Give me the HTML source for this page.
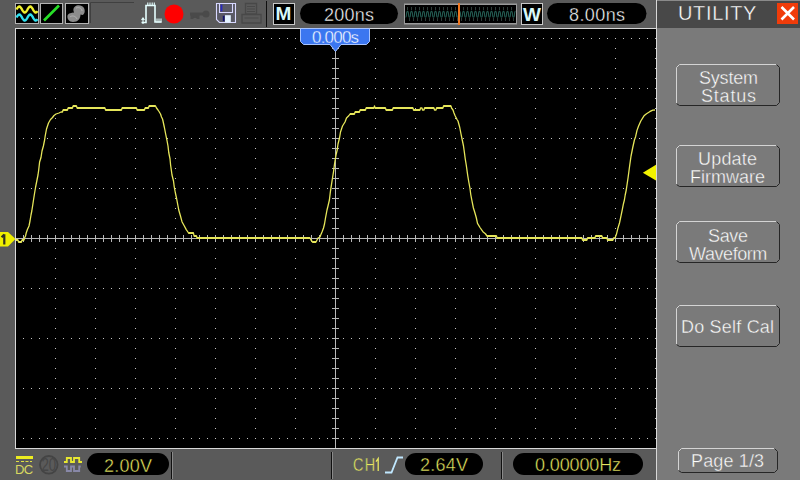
<!DOCTYPE html>
<html><head><meta charset="utf-8">
<style>
html,body{margin:0;padding:0;}
body{width:800px;height:480px;overflow:hidden;background:#5a5a5a;position:relative;font-family:"Liberation Sans",sans-serif;}
svg{position:absolute;left:0;top:0;}
.t{position:absolute;white-space:nowrap;line-height:1;font-family:"Liberation Sans",sans-serif;}
</style></head><body>
<svg width="800" height="480" viewBox="0 0 800 480" shape-rendering="auto">
<rect x="15.5" y="3.5" width="23" height="20" fill="#000" stroke="#b4b4b4"/>
<polyline fill="none" stroke="#f0f030" stroke-width="2.4" points="16.5,9.5 16.83,8.93 17.17,8.39 17.5,7.88 17.83,7.43 18.17,7.06 18.5,6.77 18.83,6.58 19.17,6.5 19.5,6.53 19.83,6.66 20.17,6.9 20.5,7.23 20.83,7.65 21.17,8.13 21.5,8.65 21.83,9.21 22.17,9.79 22.5,10.35 22.83,10.87 23.17,11.35 23.5,11.77 23.83,12.1 24.17,12.34 24.5,12.47 24.83,12.5 25.17,12.42 25.5,12.23 25.83,11.94 26.17,11.57 26.5,11.12 26.83,10.61 27.17,10.07 27.5,9.5 27.83,8.93 28.17,8.39 28.5,7.88 28.83,7.43 29.17,7.06 29.5,6.77 29.83,6.58 30.17,6.5 30.5,6.53 30.83,6.66 31.17,6.9 31.5,7.23 31.83,7.65 32.17,8.13 32.5,8.65 32.83,9.21 33.17,9.79 33.5,10.35 33.83,10.87 34.17,11.35 34.5,11.77 34.83,12.1 35.17,12.34 35.5,12.47 35.83,12.5 36.17,12.42 36.5,12.23 36.83,11.94 37.17,11.57 37.5,11.12"/>
<polyline fill="none" stroke="#30e0f0" stroke-width="2.4" points="16.5,17.5 16.83,16.93 17.17,16.39 17.5,15.88 17.83,15.43 18.17,15.06 18.5,14.77 18.83,14.58 19.17,14.5 19.5,14.53 19.83,14.66 20.17,14.9 20.5,15.23 20.83,15.65 21.17,16.13 21.5,16.65 21.83,17.21 22.17,17.79 22.5,18.35 22.83,18.87 23.17,19.35 23.5,19.77 23.83,20.1 24.17,20.34 24.5,20.47 24.83,20.5 25.17,20.42 25.5,20.23 25.83,19.94 26.17,19.57 26.5,19.12 26.83,18.61 27.17,18.07 27.5,17.5 27.83,16.93 28.17,16.39 28.5,15.88 28.83,15.43 29.17,15.06 29.5,14.77 29.83,14.58 30.17,14.5 30.5,14.53 30.83,14.66 31.17,14.9 31.5,15.23 31.83,15.65 32.17,16.13 32.5,16.65 32.83,17.21 33.17,17.79 33.5,18.35 33.83,18.87 34.17,19.35 34.5,19.77 34.83,20.1 35.17,20.34 35.5,20.47 35.83,20.5 36.17,20.42 36.5,20.23 36.83,19.94 37.17,19.57 37.5,19.12"/>
<rect x="40.5" y="3.5" width="22" height="20" fill="#000" stroke="#b4b4b4"/>
<line x1="44" y1="20.5" x2="59" y2="5.5" stroke="#28e028" stroke-width="2.6"/>
<rect x="65.5" y="3.5" width="23" height="20" fill="#000" stroke="#b4b4b4"/>
<path d="M75 6.5C77 4.5 82 4.5 84 8C85.5 11 84.5 14.5 82.5 15L80.5 14.5C80.5 18.5 78 22 73 22C69 22 67 19 67.5 15.5C68.5 13 71.5 13 74 12.5C73 10 73 8 75 6.5Z" fill="#8c8c8c"/>
<path d="M76 8C79 7 82 8 82 11M70 17C72 15 76 16 77 19" fill="none" stroke="#b0b0b0" stroke-width="1"/>
<path d="M90.5 23V2.5H134" fill="none" stroke="#404040" stroke-width="1"/>
<path d="M141.5 22.5h4.5V5.5h9v16.5h6.5" fill="none" stroke="#e6ffff" stroke-width="1.6"/>
<path d="M147.8 2.5v3.5M150 2.5v3.5M152.2 2.5v3.5M154.3 2.5v3.5M157 18.5v4M159 18.5v4M161 18.5v4M143 18v6M141.5 20l1.5-2 1.5 2" fill="none" stroke="#e6ffff" stroke-width="1.1"/>
<circle cx="174" cy="14" r="9.5" fill="#ff0000"/>
<path d="M190 14h14M192 14v5M195 14v4M198 14v5" stroke="#4a4a4a" stroke-width="3"/>
<circle cx="206" cy="14" r="3.5" fill="#4a4a4a"/>
<path d="M216.5 3.5H235.5V22.5H219.5L216.5 19.5Z" fill="#5a5a66" stroke="#d8d8ff" stroke-width="1.1"/>
<path d="M219.5 3.5V12.5H232.5V3.5" fill="none" stroke="#d8d8ff" stroke-width="1.1"/>
<rect x="220.6" y="4.5" width="1.8" height="6.8" fill="#2828c0"/>
<rect x="225" y="15.2" width="5.8" height="7.3" fill="#e4f4ff"/>
<rect x="222.8" y="15.8" width="1.7" height="5.4" fill="#101070"/>
<path d="M245.5 3.5h11v10.5h-11zM242 14.5h19v8.5h-19z" fill="none" stroke="#484848" stroke-width="1.3"/>
<path d="M247 6.5h8M247 9h8M247 11.5h8M244.5 18h14" fill="none" stroke="#484848" stroke-width="1"/>
<rect x="266" y="1" width="1" height="26" fill="#101010"/>
<rect x="273.5" y="3.5" width="21" height="21" fill="#000" stroke="#c8c8c8"/>
<rect x="300" y="3" width="98" height="21" rx="10.5" fill="#000"/>
<rect x="547" y="3" width="99.5" height="21" rx="10.5" fill="#000"/>
<rect x="404" y="3.5" width="113" height="21" fill="#9a9a9a"/>
<rect x="405" y="5" width="111" height="18" fill="#000"/>
<polyline fill="none" stroke="#22594f" stroke-width="1.1" points="405.5,17.1 405.625,17.075 405.75,16.998 405.875,16.869 406,16.681 406.125,16.426 406.25,16.082 406.375,15.59 406.5,14.2 406.625,12.81 406.75,12.318 406.875,11.974 407,11.719 407.125,11.531 407.25,11.402 407.375,11.325 407.5,11.3 407.625,11.325 407.75,11.402 407.875,11.531 408,11.719 408.125,11.974 408.25,12.318 408.375,12.81 408.5,14.2 408.625,15.59 408.75,16.082 408.875,16.426 409,16.681 409.125,16.869 409.25,16.998 409.375,17.075 409.5,17.1 409.625,17.075 409.75,16.998 409.875,16.869 410,16.681 410.125,16.426 410.25,16.082 410.375,15.59 410.5,14.2 410.625,12.81 410.75,12.318 410.875,11.974 411,11.719 411.125,11.531 411.25,11.402 411.375,11.325 411.5,11.3 411.625,11.325 411.75,11.402 411.875,11.531 412,11.719 412.125,11.974 412.25,12.318 412.375,12.81 412.5,14.2 412.625,15.59 412.75,16.082 412.875,16.426 413,16.681 413.125,16.869 413.25,16.998 413.375,17.075 413.5,17.1 413.625,17.075 413.75,16.998 413.875,16.869 414,16.681 414.125,16.426 414.25,16.082 414.375,15.59 414.5,14.2 414.625,12.81 414.75,12.318 414.875,11.974 415,11.719 415.125,11.531 415.25,11.402 415.375,11.325 415.5,11.3 415.625,11.325 415.75,11.402 415.875,11.531 416,11.719 416.125,11.974 416.25,12.318 416.375,12.81 416.5,14.2 416.625,15.59 416.75,16.082 416.875,16.426 417,16.681 417.125,16.869 417.25,16.998 417.375,17.075 417.5,17.1 417.625,17.075 417.75,16.998 417.875,16.869 418,16.681 418.125,16.426 418.25,16.082 418.375,15.59 418.5,14.2 418.625,12.81 418.75,12.318 418.875,11.974 419,11.719 419.125,11.531 419.25,11.402 419.375,11.325 419.5,11.3 419.625,11.325 419.75,11.402 419.875,11.531 420,11.719 420.125,11.974 420.25,12.318 420.375,12.81 420.5,14.2 420.625,15.59 420.75,16.082 420.875,16.426 421,16.681 421.125,16.869 421.25,16.998 421.375,17.075 421.5,17.1 421.625,17.075 421.75,16.998 421.875,16.869 422,16.681 422.125,16.426 422.25,16.082 422.375,15.59 422.5,14.2 422.625,12.81 422.75,12.318 422.875,11.974 423,11.719 423.125,11.531 423.25,11.402 423.375,11.325 423.5,11.3 423.625,11.325 423.75,11.402 423.875,11.531 424,11.719 424.125,11.974 424.25,12.318 424.375,12.81 424.5,14.2 424.625,15.59 424.75,16.082 424.875,16.426 425,16.681 425.125,16.869 425.25,16.998 425.375,17.075 425.5,17.1 425.625,17.075 425.75,16.998 425.875,16.869 426,16.681 426.125,16.426 426.25,16.082 426.375,15.59 426.5,14.2 426.625,12.81 426.75,12.318 426.875,11.974 427,11.719 427.125,11.531 427.25,11.402 427.375,11.325 427.5,11.3 427.625,11.325 427.75,11.402 427.875,11.531 428,11.719 428.125,11.974 428.25,12.318 428.375,12.81 428.5,14.2 428.625,15.59 428.75,16.082 428.875,16.426 429,16.681 429.125,16.869 429.25,16.998 429.375,17.075 429.5,17.1 429.625,17.075 429.75,16.998 429.875,16.869 430,16.681 430.125,16.426 430.25,16.082 430.375,15.59 430.5,14.2 430.625,12.81 430.75,12.318 430.875,11.974 431,11.719 431.125,11.531 431.25,11.402 431.375,11.325 431.5,11.3 431.625,11.325 431.75,11.402 431.875,11.531 432,11.719 432.125,11.974 432.25,12.318 432.375,12.81 432.5,14.2 432.625,15.59 432.75,16.082 432.875,16.426 433,16.681 433.125,16.869 433.25,16.998 433.375,17.075 433.5,17.1 433.625,17.075 433.75,16.998 433.875,16.869 434,16.681 434.125,16.426 434.25,16.082 434.375,15.59 434.5,14.2 434.625,12.81 434.75,12.318 434.875,11.974 435,11.719 435.125,11.531 435.25,11.402 435.375,11.325 435.5,11.3 435.625,11.325 435.75,11.402 435.875,11.531 436,11.719 436.125,11.974 436.25,12.318 436.375,12.81 436.5,14.2 436.625,15.59 436.75,16.082 436.875,16.426 437,16.681 437.125,16.869 437.25,16.998 437.375,17.075 437.5,17.1 437.625,17.075 437.75,16.998 437.875,16.869 438,16.681 438.125,16.426 438.25,16.082 438.375,15.59 438.5,14.2 438.625,12.81 438.75,12.318 438.875,11.974 439,11.719 439.125,11.531 439.25,11.402 439.375,11.325 439.5,11.3 439.625,11.325 439.75,11.402 439.875,11.531 440,11.719 440.125,11.974 440.25,12.318 440.375,12.81 440.5,14.2 440.625,15.59 440.75,16.082 440.875,16.426 441,16.681 441.125,16.869 441.25,16.998 441.375,17.075 441.5,17.1 441.625,17.075 441.75,16.998 441.875,16.869 442,16.681 442.125,16.426 442.25,16.082 442.375,15.59 442.5,14.2 442.625,12.81 442.75,12.318 442.875,11.974 443,11.719 443.125,11.531 443.25,11.402 443.375,11.325 443.5,11.3 443.625,11.325 443.75,11.402 443.875,11.531 444,11.719 444.125,11.974 444.25,12.318 444.375,12.81 444.5,14.2 444.625,15.59 444.75,16.082 444.875,16.426 445,16.681 445.125,16.869 445.25,16.998 445.375,17.075 445.5,17.1 445.625,17.075 445.75,16.998 445.875,16.869 446,16.681 446.125,16.426 446.25,16.082 446.375,15.59 446.5,14.2 446.625,12.81 446.75,12.318 446.875,11.974 447,11.719 447.125,11.531 447.25,11.402 447.375,11.325 447.5,11.3 447.625,11.325 447.75,11.402 447.875,11.531 448,11.719 448.125,11.974 448.25,12.318 448.375,12.81 448.5,14.2 448.625,15.59 448.75,16.082 448.875,16.426 449,16.681 449.125,16.869 449.25,16.998 449.375,17.075 449.5,17.1 449.625,17.075 449.75,16.998 449.875,16.869 450,16.681 450.125,16.426 450.25,16.082 450.375,15.59 450.5,14.2 450.625,12.81 450.75,12.318 450.875,11.974 451,11.719 451.125,11.531 451.25,11.402 451.375,11.325 451.5,11.3 451.625,11.325 451.75,11.402 451.875,11.531 452,11.719 452.125,11.974 452.25,12.318 452.375,12.81 452.5,14.2 452.625,15.59 452.75,16.082 452.875,16.426 453,16.681 453.125,16.869 453.25,16.998 453.375,17.075 453.5,17.1 453.625,17.075 453.75,16.998 453.875,16.869 454,16.681 454.125,16.426 454.25,16.082 454.375,15.59 454.5,14.2 454.625,12.81 454.75,12.318 454.875,11.974 455,11.719 455.125,11.531 455.25,11.402 455.375,11.325 455.5,11.3 455.625,11.325 455.75,11.402 455.875,11.531 456,11.719 456.125,11.974 456.25,12.318 456.375,12.81 456.5,14.2 456.625,15.59 456.75,16.082 456.875,16.426 457,16.681 457.125,16.869 457.25,16.998 457.375,17.075 457.5,17.1 457.625,17.075 457.75,16.998 457.875,16.869 458,16.681 458.125,16.426 458.25,16.082 458.375,15.59 458.5,14.2 458.625,12.81 458.75,12.318 458.875,11.974 459,11.719 459.125,11.531 459.25,11.402 459.375,11.325 459.5,11.3 459.625,11.325 459.75,11.402 459.875,11.531 460,11.719 460.125,11.974 460.25,12.318 460.375,12.81 460.5,14.2 460.625,15.59 460.75,16.082 460.875,16.426 461,16.681 461.125,16.869 461.25,16.998 461.375,17.075 461.5,17.1 461.625,17.075 461.75,16.998 461.875,16.869 462,16.681 462.125,16.426 462.25,16.082 462.375,15.59 462.5,14.2 462.625,12.81 462.75,12.318 462.875,11.974 463,11.719 463.125,11.531 463.25,11.402 463.375,11.325 463.5,11.3 463.625,11.325 463.75,11.402 463.875,11.531 464,11.719 464.125,11.974 464.25,12.318 464.375,12.81 464.5,14.2 464.625,15.59 464.75,16.082 464.875,16.426 465,16.681 465.125,16.869 465.25,16.998 465.375,17.075 465.5,17.1 465.625,17.075 465.75,16.998 465.875,16.869 466,16.681 466.125,16.426 466.25,16.082 466.375,15.59 466.5,14.2 466.625,12.81 466.75,12.318 466.875,11.974 467,11.719 467.125,11.531 467.25,11.402 467.375,11.325 467.5,11.3 467.625,11.325 467.75,11.402 467.875,11.531 468,11.719 468.125,11.974 468.25,12.318 468.375,12.81 468.5,14.2 468.625,15.59 468.75,16.082 468.875,16.426 469,16.681 469.125,16.869 469.25,16.998 469.375,17.075 469.5,17.1 469.625,17.075 469.75,16.998 469.875,16.869 470,16.681 470.125,16.426 470.25,16.082 470.375,15.59 470.5,14.2 470.625,12.81 470.75,12.318 470.875,11.974 471,11.719 471.125,11.531 471.25,11.402 471.375,11.325 471.5,11.3 471.625,11.325 471.75,11.402 471.875,11.531 472,11.719 472.125,11.974 472.25,12.318 472.375,12.81 472.5,14.2 472.625,15.59 472.75,16.082 472.875,16.426 473,16.681 473.125,16.869 473.25,16.998 473.375,17.075 473.5,17.1 473.625,17.075 473.75,16.998 473.875,16.869 474,16.681 474.125,16.426 474.25,16.082 474.375,15.59 474.5,14.2 474.625,12.81 474.75,12.318 474.875,11.974 475,11.719 475.125,11.531 475.25,11.402 475.375,11.325 475.5,11.3 475.625,11.325 475.75,11.402 475.875,11.531 476,11.719 476.125,11.974 476.25,12.318 476.375,12.81 476.5,14.2 476.625,15.59 476.75,16.082 476.875,16.426 477,16.681 477.125,16.869 477.25,16.998 477.375,17.075 477.5,17.1 477.625,17.075 477.75,16.998 477.875,16.869 478,16.681 478.125,16.426 478.25,16.082 478.375,15.59 478.5,14.2 478.625,12.81 478.75,12.318 478.875,11.974 479,11.719 479.125,11.531 479.25,11.402 479.375,11.325 479.5,11.3 479.625,11.325 479.75,11.402 479.875,11.531 480,11.719 480.125,11.974 480.25,12.318 480.375,12.81 480.5,14.2 480.625,15.59 480.75,16.082 480.875,16.426 481,16.681 481.125,16.869 481.25,16.998 481.375,17.075 481.5,17.1 481.625,17.075 481.75,16.998 481.875,16.869 482,16.681 482.125,16.426 482.25,16.082 482.375,15.59 482.5,14.2 482.625,12.81 482.75,12.318 482.875,11.974 483,11.719 483.125,11.531 483.25,11.402 483.375,11.325 483.5,11.3 483.625,11.325 483.75,11.402 483.875,11.531 484,11.719 484.125,11.974 484.25,12.318 484.375,12.81 484.5,14.2 484.625,15.59 484.75,16.082 484.875,16.426 485,16.681 485.125,16.869 485.25,16.998 485.375,17.075 485.5,17.1 485.625,17.075 485.75,16.998 485.875,16.869 486,16.681 486.125,16.426 486.25,16.082 486.375,15.59 486.5,14.2 486.625,12.81 486.75,12.318 486.875,11.974 487,11.719 487.125,11.531 487.25,11.402 487.375,11.325 487.5,11.3 487.625,11.325 487.75,11.402 487.875,11.531 488,11.719 488.125,11.974 488.25,12.318 488.375,12.81 488.5,14.2 488.625,15.59 488.75,16.082 488.875,16.426 489,16.681 489.125,16.869 489.25,16.998 489.375,17.075 489.5,17.1 489.625,17.075 489.75,16.998 489.875,16.869 490,16.681 490.125,16.426 490.25,16.082 490.375,15.59 490.5,14.2 490.625,12.81 490.75,12.318 490.875,11.974 491,11.719 491.125,11.531 491.25,11.402 491.375,11.325 491.5,11.3 491.625,11.325 491.75,11.402 491.875,11.531 492,11.719 492.125,11.974 492.25,12.318 492.375,12.81 492.5,14.2 492.625,15.59 492.75,16.082 492.875,16.426 493,16.681 493.125,16.869 493.25,16.998 493.375,17.075 493.5,17.1 493.625,17.075 493.75,16.998 493.875,16.869 494,16.681 494.125,16.426 494.25,16.082 494.375,15.59 494.5,14.2 494.625,12.81 494.75,12.318 494.875,11.974 495,11.719 495.125,11.531 495.25,11.402 495.375,11.325 495.5,11.3 495.625,11.325 495.75,11.402 495.875,11.531 496,11.719 496.125,11.974 496.25,12.318 496.375,12.81 496.5,14.2 496.625,15.59 496.75,16.082 496.875,16.426 497,16.681 497.125,16.869 497.25,16.998 497.375,17.075 497.5,17.1 497.625,17.075 497.75,16.998 497.875,16.869 498,16.681 498.125,16.426 498.25,16.082 498.375,15.59 498.5,14.2 498.625,12.81 498.75,12.318 498.875,11.974 499,11.719 499.125,11.531 499.25,11.402 499.375,11.325 499.5,11.3 499.625,11.325 499.75,11.402 499.875,11.531 500,11.719 500.125,11.974 500.25,12.318 500.375,12.81 500.5,14.2 500.625,15.59 500.75,16.082 500.875,16.426 501,16.681 501.125,16.869 501.25,16.998 501.375,17.075 501.5,17.1 501.625,17.075 501.75,16.998 501.875,16.869 502,16.681 502.125,16.426 502.25,16.082 502.375,15.59 502.5,14.2 502.625,12.81 502.75,12.318 502.875,11.974 503,11.719 503.125,11.531 503.25,11.402 503.375,11.325 503.5,11.3 503.625,11.325 503.75,11.402 503.875,11.531 504,11.719 504.125,11.974 504.25,12.318 504.375,12.81 504.5,14.2 504.625,15.59 504.75,16.082 504.875,16.426 505,16.681 505.125,16.869 505.25,16.998 505.375,17.075 505.5,17.1 505.625,17.075 505.75,16.998 505.875,16.869 506,16.681 506.125,16.426 506.25,16.082 506.375,15.59 506.5,14.2 506.625,12.81 506.75,12.318 506.875,11.974 507,11.719 507.125,11.531 507.25,11.402 507.375,11.325 507.5,11.3 507.625,11.325 507.75,11.402 507.875,11.531 508,11.719 508.125,11.974 508.25,12.318 508.375,12.81 508.5,14.2 508.625,15.59 508.75,16.082 508.875,16.426 509,16.681 509.125,16.869 509.25,16.998 509.375,17.075 509.5,17.1 509.625,17.075 509.75,16.998 509.875,16.869 510,16.681 510.125,16.426 510.25,16.082 510.375,15.59 510.5,14.2 510.625,12.81 510.75,12.318 510.875,11.974 511,11.719 511.125,11.531 511.25,11.402 511.375,11.325 511.5,11.3 511.625,11.325 511.75,11.402 511.875,11.531 512,11.719 512.125,11.974 512.25,12.318 512.375,12.81 512.5,14.2 512.625,15.59 512.75,16.082 512.875,16.426 513,16.681 513.125,16.869 513.25,16.998 513.375,17.075 513.5,17.1 513.625,17.075 513.75,16.998 513.875,16.869 514,16.681 514.125,16.426 514.25,16.082 514.375,15.59 514.5,14.2 514.625,12.81 514.75,12.318 514.875,11.974 515,11.719 515.125,11.531 515.25,11.402 515.375,11.325 515.5,11.3"/>
<path fill="#2e3c38" d="M407 7h1v3h-1zM409 18h1v3h-1zM411 7h1v3h-1zM413 18h1v3h-1zM415 7h1v3h-1zM417 18h1v3h-1zM419 7h1v3h-1zM421 18h1v3h-1zM423 7h1v3h-1zM425 18h1v3h-1zM427 7h1v3h-1zM429 18h1v3h-1zM431 7h1v3h-1zM433 18h1v3h-1zM435 7h1v3h-1zM437 18h1v3h-1zM439 7h1v3h-1zM441 18h1v3h-1zM443 7h1v3h-1zM445 18h1v3h-1zM447 7h1v3h-1zM449 18h1v3h-1zM451 7h1v3h-1zM453 18h1v3h-1zM455 7h1v3h-1zM457 18h1v3h-1zM459 7h1v3h-1zM461 18h1v3h-1zM463 7h1v3h-1zM465 18h1v3h-1zM467 7h1v3h-1zM469 18h1v3h-1zM471 7h1v3h-1zM473 18h1v3h-1zM475 7h1v3h-1zM477 18h1v3h-1zM479 7h1v3h-1zM481 18h1v3h-1zM483 7h1v3h-1zM485 18h1v3h-1zM487 7h1v3h-1zM489 18h1v3h-1zM491 7h1v3h-1zM493 18h1v3h-1zM495 7h1v3h-1zM497 18h1v3h-1zM499 7h1v3h-1zM501 18h1v3h-1zM503 7h1v3h-1zM505 18h1v3h-1zM507 7h1v3h-1zM509 18h1v3h-1zM511 7h1v3h-1zM513 18h1v3h-1z"/>
<rect x="458" y="3" width="2" height="22" fill="#f07820"/>
<rect x="521.5" y="3.5" width="21" height="21" fill="#000" stroke="#c8c8c8"/>
<rect x="657" y="0" width="143" height="480" fill="#7a7a7a"/>
<rect x="657" y="1" width="143" height="27" fill="#484848"/>
<rect x="657" y="0" width="143" height="1" fill="#8a8a8a"/>
<rect x="777" y="3" width="21" height="21" fill="#f03c0a"/>
<path d="M781.5 7l12.5 12.5M794 7l-12.5 12.5" stroke="#fff" stroke-width="2.6"/>
<path d="M676.5 103.5V67.5L679.5 64.5H776.5" fill="none" stroke="#d4d4d4"/><path d="M776.5 64.5L779.5 67.5V102.5L776.5 105.5H679.5L676.5 103.5" fill="none" stroke="#262626"/>
<path d="M676.5 184.5V148.5L679.5 145.5H776.5" fill="none" stroke="#d4d4d4"/><path d="M776.5 145.5L779.5 148.5V183.5L776.5 186.5H679.5L676.5 184.5" fill="none" stroke="#262626"/>
<path d="M676.5 260.5V224.5L679.5 221.5H776.5" fill="none" stroke="#d4d4d4"/><path d="M776.5 221.5L779.5 224.5V259.5L776.5 262.5H679.5L676.5 260.5" fill="none" stroke="#262626"/>
<path d="M676.5 344.5V308.5L679.5 305.5H776.5" fill="none" stroke="#d4d4d4"/><path d="M776.5 305.5L779.5 308.5V343.5L776.5 346.5H679.5L676.5 344.5" fill="none" stroke="#262626"/>
<path d="M678.5 470.5V451.5L681.5 448.5H774.5" fill="none" stroke="#d4d4d4"/><path d="M774.5 448.5L777.5 451.5V469.5L774.5 472.5H681.5L678.5 470.5" fill="none" stroke="#262626"/>
<rect x="16" y="456" width="17" height="3" fill="#ecec20"/>
<path d="M16 461h3v1h-3zM21 461h3v1h-3zM25.5 461h3v1h-3zM30 461h2v1h-2z" fill="#e0e040"/>
<circle cx="48.8" cy="464.8" r="8.8" fill="none" stroke="#444444" stroke-width="1.8"/>
<text x="48.8" y="471.5" text-anchor="middle" font-family="Liberation Sans" font-size="19" fill="#464646" transform="translate(48.8 0) scale(0.7 1) translate(-48.8 0)">20</text>
<path d="M64 462h2.8v-4h4.2v4h3v-4h5.2v4h2.8" fill="none" stroke="#e8e830" stroke-width="1.8"/>
<path d="M64 466.5h2.8v4.5h4.2v-4.5h3v4.5h5.2v-4.5h1.5" fill="none" stroke="#8888a8" stroke-width="1.8"/>
<rect x="87" y="453" width="82" height="22" rx="11" fill="#000"/>
<rect x="171" y="452" width="1" height="27" fill="#101010"/><rect x="172" y="452" width="1" height="27" fill="#8a8a8a"/>
<rect x="331" y="452" width="1" height="27" fill="#101010"/><rect x="332" y="452" width="1" height="27" fill="#8a8a8a"/>
<path d="M376 461.6L378.2 458.6V471" fill="none" stroke="#e8e860" stroke-width="1.3"/>
<path d="M385 472.5h6.5l6-15h5.5" fill="none" stroke="#c0e8ff" stroke-width="1.8"/>
<rect x="405" y="453" width="78" height="22" rx="11" fill="#000"/>
<rect x="501" y="452" width="1" height="27" fill="#101010"/><rect x="502" y="452" width="1" height="27" fill="#8a8a8a"/>
<rect x="513" y="453" width="130" height="22" rx="11" fill="#000"/>
<rect x="16" y="29" width="640" height="419" fill="#000"/>
<path fill="#c4c4c4" d="M23 38h1v1h-1zM31 38h1v1h-1zM39 38h1v1h-1zM47 38h1v1h-1zM55 38h1v1h-1zM63 38h1v1h-1zM71 38h1v1h-1zM79 38h1v1h-1zM87 38h1v1h-1zM95 38h1v1h-1zM103 38h1v1h-1zM111 38h1v1h-1zM119 38h1v1h-1zM127 38h1v1h-1zM135 38h1v1h-1zM143 38h1v1h-1zM151 38h1v1h-1zM159 38h1v1h-1zM167 38h1v1h-1zM175 38h1v1h-1zM183 38h1v1h-1zM191 38h1v1h-1zM199 38h1v1h-1zM207 38h1v1h-1zM215 38h1v1h-1zM223 38h1v1h-1zM231 38h1v1h-1zM239 38h1v1h-1zM247 38h1v1h-1zM255 38h1v1h-1zM263 38h1v1h-1zM271 38h1v1h-1zM279 38h1v1h-1zM287 38h1v1h-1zM295 38h1v1h-1zM303 38h1v1h-1zM311 38h1v1h-1zM319 38h1v1h-1zM327 38h1v1h-1zM335 38h1v1h-1zM343 38h1v1h-1zM351 38h1v1h-1zM359 38h1v1h-1zM367 38h1v1h-1zM375 38h1v1h-1zM383 38h1v1h-1zM391 38h1v1h-1zM399 38h1v1h-1zM407 38h1v1h-1zM415 38h1v1h-1zM423 38h1v1h-1zM431 38h1v1h-1zM439 38h1v1h-1zM447 38h1v1h-1zM455 38h1v1h-1zM463 38h1v1h-1zM471 38h1v1h-1zM479 38h1v1h-1zM487 38h1v1h-1zM495 38h1v1h-1zM503 38h1v1h-1zM511 38h1v1h-1zM519 38h1v1h-1zM527 38h1v1h-1zM535 38h1v1h-1zM543 38h1v1h-1zM551 38h1v1h-1zM559 38h1v1h-1zM567 38h1v1h-1zM575 38h1v1h-1zM583 38h1v1h-1zM591 38h1v1h-1zM599 38h1v1h-1zM607 38h1v1h-1zM615 38h1v1h-1zM623 38h1v1h-1zM631 38h1v1h-1zM639 38h1v1h-1zM647 38h1v1h-1zM23 88h1v1h-1zM31 88h1v1h-1zM39 88h1v1h-1zM47 88h1v1h-1zM55 88h1v1h-1zM63 88h1v1h-1zM71 88h1v1h-1zM79 88h1v1h-1zM87 88h1v1h-1zM95 88h1v1h-1zM103 88h1v1h-1zM111 88h1v1h-1zM119 88h1v1h-1zM127 88h1v1h-1zM135 88h1v1h-1zM143 88h1v1h-1zM151 88h1v1h-1zM159 88h1v1h-1zM167 88h1v1h-1zM175 88h1v1h-1zM183 88h1v1h-1zM191 88h1v1h-1zM199 88h1v1h-1zM207 88h1v1h-1zM215 88h1v1h-1zM223 88h1v1h-1zM231 88h1v1h-1zM239 88h1v1h-1zM247 88h1v1h-1zM255 88h1v1h-1zM263 88h1v1h-1zM271 88h1v1h-1zM279 88h1v1h-1zM287 88h1v1h-1zM295 88h1v1h-1zM303 88h1v1h-1zM311 88h1v1h-1zM319 88h1v1h-1zM327 88h1v1h-1zM335 88h1v1h-1zM343 88h1v1h-1zM351 88h1v1h-1zM359 88h1v1h-1zM367 88h1v1h-1zM375 88h1v1h-1zM383 88h1v1h-1zM391 88h1v1h-1zM399 88h1v1h-1zM407 88h1v1h-1zM415 88h1v1h-1zM423 88h1v1h-1zM431 88h1v1h-1zM439 88h1v1h-1zM447 88h1v1h-1zM455 88h1v1h-1zM463 88h1v1h-1zM471 88h1v1h-1zM479 88h1v1h-1zM487 88h1v1h-1zM495 88h1v1h-1zM503 88h1v1h-1zM511 88h1v1h-1zM519 88h1v1h-1zM527 88h1v1h-1zM535 88h1v1h-1zM543 88h1v1h-1zM551 88h1v1h-1zM559 88h1v1h-1zM567 88h1v1h-1zM575 88h1v1h-1zM583 88h1v1h-1zM591 88h1v1h-1zM599 88h1v1h-1zM607 88h1v1h-1zM615 88h1v1h-1zM623 88h1v1h-1zM631 88h1v1h-1zM639 88h1v1h-1zM647 88h1v1h-1zM23 138h1v1h-1zM31 138h1v1h-1zM39 138h1v1h-1zM47 138h1v1h-1zM55 138h1v1h-1zM63 138h1v1h-1zM71 138h1v1h-1zM79 138h1v1h-1zM87 138h1v1h-1zM95 138h1v1h-1zM103 138h1v1h-1zM111 138h1v1h-1zM119 138h1v1h-1zM127 138h1v1h-1zM135 138h1v1h-1zM143 138h1v1h-1zM151 138h1v1h-1zM159 138h1v1h-1zM167 138h1v1h-1zM175 138h1v1h-1zM183 138h1v1h-1zM191 138h1v1h-1zM199 138h1v1h-1zM207 138h1v1h-1zM215 138h1v1h-1zM223 138h1v1h-1zM231 138h1v1h-1zM239 138h1v1h-1zM247 138h1v1h-1zM255 138h1v1h-1zM263 138h1v1h-1zM271 138h1v1h-1zM279 138h1v1h-1zM287 138h1v1h-1zM295 138h1v1h-1zM303 138h1v1h-1zM311 138h1v1h-1zM319 138h1v1h-1zM327 138h1v1h-1zM335 138h1v1h-1zM343 138h1v1h-1zM351 138h1v1h-1zM359 138h1v1h-1zM367 138h1v1h-1zM375 138h1v1h-1zM383 138h1v1h-1zM391 138h1v1h-1zM399 138h1v1h-1zM407 138h1v1h-1zM415 138h1v1h-1zM423 138h1v1h-1zM431 138h1v1h-1zM439 138h1v1h-1zM447 138h1v1h-1zM455 138h1v1h-1zM463 138h1v1h-1zM471 138h1v1h-1zM479 138h1v1h-1zM487 138h1v1h-1zM495 138h1v1h-1zM503 138h1v1h-1zM511 138h1v1h-1zM519 138h1v1h-1zM527 138h1v1h-1zM535 138h1v1h-1zM543 138h1v1h-1zM551 138h1v1h-1zM559 138h1v1h-1zM567 138h1v1h-1zM575 138h1v1h-1zM583 138h1v1h-1zM591 138h1v1h-1zM599 138h1v1h-1zM607 138h1v1h-1zM615 138h1v1h-1zM623 138h1v1h-1zM631 138h1v1h-1zM639 138h1v1h-1zM647 138h1v1h-1zM23 188h1v1h-1zM31 188h1v1h-1zM39 188h1v1h-1zM47 188h1v1h-1zM55 188h1v1h-1zM63 188h1v1h-1zM71 188h1v1h-1zM79 188h1v1h-1zM87 188h1v1h-1zM95 188h1v1h-1zM103 188h1v1h-1zM111 188h1v1h-1zM119 188h1v1h-1zM127 188h1v1h-1zM135 188h1v1h-1zM143 188h1v1h-1zM151 188h1v1h-1zM159 188h1v1h-1zM167 188h1v1h-1zM175 188h1v1h-1zM183 188h1v1h-1zM191 188h1v1h-1zM199 188h1v1h-1zM207 188h1v1h-1zM215 188h1v1h-1zM223 188h1v1h-1zM231 188h1v1h-1zM239 188h1v1h-1zM247 188h1v1h-1zM255 188h1v1h-1zM263 188h1v1h-1zM271 188h1v1h-1zM279 188h1v1h-1zM287 188h1v1h-1zM295 188h1v1h-1zM303 188h1v1h-1zM311 188h1v1h-1zM319 188h1v1h-1zM327 188h1v1h-1zM335 188h1v1h-1zM343 188h1v1h-1zM351 188h1v1h-1zM359 188h1v1h-1zM367 188h1v1h-1zM375 188h1v1h-1zM383 188h1v1h-1zM391 188h1v1h-1zM399 188h1v1h-1zM407 188h1v1h-1zM415 188h1v1h-1zM423 188h1v1h-1zM431 188h1v1h-1zM439 188h1v1h-1zM447 188h1v1h-1zM455 188h1v1h-1zM463 188h1v1h-1zM471 188h1v1h-1zM479 188h1v1h-1zM487 188h1v1h-1zM495 188h1v1h-1zM503 188h1v1h-1zM511 188h1v1h-1zM519 188h1v1h-1zM527 188h1v1h-1zM535 188h1v1h-1zM543 188h1v1h-1zM551 188h1v1h-1zM559 188h1v1h-1zM567 188h1v1h-1zM575 188h1v1h-1zM583 188h1v1h-1zM591 188h1v1h-1zM599 188h1v1h-1zM607 188h1v1h-1zM615 188h1v1h-1zM623 188h1v1h-1zM631 188h1v1h-1zM639 188h1v1h-1zM647 188h1v1h-1zM23 288h1v1h-1zM31 288h1v1h-1zM39 288h1v1h-1zM47 288h1v1h-1zM55 288h1v1h-1zM63 288h1v1h-1zM71 288h1v1h-1zM79 288h1v1h-1zM87 288h1v1h-1zM95 288h1v1h-1zM103 288h1v1h-1zM111 288h1v1h-1zM119 288h1v1h-1zM127 288h1v1h-1zM135 288h1v1h-1zM143 288h1v1h-1zM151 288h1v1h-1zM159 288h1v1h-1zM167 288h1v1h-1zM175 288h1v1h-1zM183 288h1v1h-1zM191 288h1v1h-1zM199 288h1v1h-1zM207 288h1v1h-1zM215 288h1v1h-1zM223 288h1v1h-1zM231 288h1v1h-1zM239 288h1v1h-1zM247 288h1v1h-1zM255 288h1v1h-1zM263 288h1v1h-1zM271 288h1v1h-1zM279 288h1v1h-1zM287 288h1v1h-1zM295 288h1v1h-1zM303 288h1v1h-1zM311 288h1v1h-1zM319 288h1v1h-1zM327 288h1v1h-1zM335 288h1v1h-1zM343 288h1v1h-1zM351 288h1v1h-1zM359 288h1v1h-1zM367 288h1v1h-1zM375 288h1v1h-1zM383 288h1v1h-1zM391 288h1v1h-1zM399 288h1v1h-1zM407 288h1v1h-1zM415 288h1v1h-1zM423 288h1v1h-1zM431 288h1v1h-1zM439 288h1v1h-1zM447 288h1v1h-1zM455 288h1v1h-1zM463 288h1v1h-1zM471 288h1v1h-1zM479 288h1v1h-1zM487 288h1v1h-1zM495 288h1v1h-1zM503 288h1v1h-1zM511 288h1v1h-1zM519 288h1v1h-1zM527 288h1v1h-1zM535 288h1v1h-1zM543 288h1v1h-1zM551 288h1v1h-1zM559 288h1v1h-1zM567 288h1v1h-1zM575 288h1v1h-1zM583 288h1v1h-1zM591 288h1v1h-1zM599 288h1v1h-1zM607 288h1v1h-1zM615 288h1v1h-1zM623 288h1v1h-1zM631 288h1v1h-1zM639 288h1v1h-1zM647 288h1v1h-1zM23 338h1v1h-1zM31 338h1v1h-1zM39 338h1v1h-1zM47 338h1v1h-1zM55 338h1v1h-1zM63 338h1v1h-1zM71 338h1v1h-1zM79 338h1v1h-1zM87 338h1v1h-1zM95 338h1v1h-1zM103 338h1v1h-1zM111 338h1v1h-1zM119 338h1v1h-1zM127 338h1v1h-1zM135 338h1v1h-1zM143 338h1v1h-1zM151 338h1v1h-1zM159 338h1v1h-1zM167 338h1v1h-1zM175 338h1v1h-1zM183 338h1v1h-1zM191 338h1v1h-1zM199 338h1v1h-1zM207 338h1v1h-1zM215 338h1v1h-1zM223 338h1v1h-1zM231 338h1v1h-1zM239 338h1v1h-1zM247 338h1v1h-1zM255 338h1v1h-1zM263 338h1v1h-1zM271 338h1v1h-1zM279 338h1v1h-1zM287 338h1v1h-1zM295 338h1v1h-1zM303 338h1v1h-1zM311 338h1v1h-1zM319 338h1v1h-1zM327 338h1v1h-1zM335 338h1v1h-1zM343 338h1v1h-1zM351 338h1v1h-1zM359 338h1v1h-1zM367 338h1v1h-1zM375 338h1v1h-1zM383 338h1v1h-1zM391 338h1v1h-1zM399 338h1v1h-1zM407 338h1v1h-1zM415 338h1v1h-1zM423 338h1v1h-1zM431 338h1v1h-1zM439 338h1v1h-1zM447 338h1v1h-1zM455 338h1v1h-1zM463 338h1v1h-1zM471 338h1v1h-1zM479 338h1v1h-1zM487 338h1v1h-1zM495 338h1v1h-1zM503 338h1v1h-1zM511 338h1v1h-1zM519 338h1v1h-1zM527 338h1v1h-1zM535 338h1v1h-1zM543 338h1v1h-1zM551 338h1v1h-1zM559 338h1v1h-1zM567 338h1v1h-1zM575 338h1v1h-1zM583 338h1v1h-1zM591 338h1v1h-1zM599 338h1v1h-1zM607 338h1v1h-1zM615 338h1v1h-1zM623 338h1v1h-1zM631 338h1v1h-1zM639 338h1v1h-1zM647 338h1v1h-1zM23 388h1v1h-1zM31 388h1v1h-1zM39 388h1v1h-1zM47 388h1v1h-1zM55 388h1v1h-1zM63 388h1v1h-1zM71 388h1v1h-1zM79 388h1v1h-1zM87 388h1v1h-1zM95 388h1v1h-1zM103 388h1v1h-1zM111 388h1v1h-1zM119 388h1v1h-1zM127 388h1v1h-1zM135 388h1v1h-1zM143 388h1v1h-1zM151 388h1v1h-1zM159 388h1v1h-1zM167 388h1v1h-1zM175 388h1v1h-1zM183 388h1v1h-1zM191 388h1v1h-1zM199 388h1v1h-1zM207 388h1v1h-1zM215 388h1v1h-1zM223 388h1v1h-1zM231 388h1v1h-1zM239 388h1v1h-1zM247 388h1v1h-1zM255 388h1v1h-1zM263 388h1v1h-1zM271 388h1v1h-1zM279 388h1v1h-1zM287 388h1v1h-1zM295 388h1v1h-1zM303 388h1v1h-1zM311 388h1v1h-1zM319 388h1v1h-1zM327 388h1v1h-1zM335 388h1v1h-1zM343 388h1v1h-1zM351 388h1v1h-1zM359 388h1v1h-1zM367 388h1v1h-1zM375 388h1v1h-1zM383 388h1v1h-1zM391 388h1v1h-1zM399 388h1v1h-1zM407 388h1v1h-1zM415 388h1v1h-1zM423 388h1v1h-1zM431 388h1v1h-1zM439 388h1v1h-1zM447 388h1v1h-1zM455 388h1v1h-1zM463 388h1v1h-1zM471 388h1v1h-1zM479 388h1v1h-1zM487 388h1v1h-1zM495 388h1v1h-1zM503 388h1v1h-1zM511 388h1v1h-1zM519 388h1v1h-1zM527 388h1v1h-1zM535 388h1v1h-1zM543 388h1v1h-1zM551 388h1v1h-1zM559 388h1v1h-1zM567 388h1v1h-1zM575 388h1v1h-1zM583 388h1v1h-1zM591 388h1v1h-1zM599 388h1v1h-1zM607 388h1v1h-1zM615 388h1v1h-1zM623 388h1v1h-1zM631 388h1v1h-1zM639 388h1v1h-1zM647 388h1v1h-1zM23 438h1v1h-1zM31 438h1v1h-1zM39 438h1v1h-1zM47 438h1v1h-1zM55 438h1v1h-1zM63 438h1v1h-1zM71 438h1v1h-1zM79 438h1v1h-1zM87 438h1v1h-1zM95 438h1v1h-1zM103 438h1v1h-1zM111 438h1v1h-1zM119 438h1v1h-1zM127 438h1v1h-1zM135 438h1v1h-1zM143 438h1v1h-1zM151 438h1v1h-1zM159 438h1v1h-1zM167 438h1v1h-1zM175 438h1v1h-1zM183 438h1v1h-1zM191 438h1v1h-1zM199 438h1v1h-1zM207 438h1v1h-1zM215 438h1v1h-1zM223 438h1v1h-1zM231 438h1v1h-1zM239 438h1v1h-1zM247 438h1v1h-1zM255 438h1v1h-1zM263 438h1v1h-1zM271 438h1v1h-1zM279 438h1v1h-1zM287 438h1v1h-1zM295 438h1v1h-1zM303 438h1v1h-1zM311 438h1v1h-1zM319 438h1v1h-1zM327 438h1v1h-1zM335 438h1v1h-1zM343 438h1v1h-1zM351 438h1v1h-1zM359 438h1v1h-1zM367 438h1v1h-1zM375 438h1v1h-1zM383 438h1v1h-1zM391 438h1v1h-1zM399 438h1v1h-1zM407 438h1v1h-1zM415 438h1v1h-1zM423 438h1v1h-1zM431 438h1v1h-1zM439 438h1v1h-1zM447 438h1v1h-1zM455 438h1v1h-1zM463 438h1v1h-1zM471 438h1v1h-1zM479 438h1v1h-1zM487 438h1v1h-1zM495 438h1v1h-1zM503 438h1v1h-1zM511 438h1v1h-1zM519 438h1v1h-1zM527 438h1v1h-1zM535 438h1v1h-1zM543 438h1v1h-1zM551 438h1v1h-1zM559 438h1v1h-1zM567 438h1v1h-1zM575 438h1v1h-1zM583 438h1v1h-1zM591 438h1v1h-1zM599 438h1v1h-1zM607 438h1v1h-1zM615 438h1v1h-1zM623 438h1v1h-1zM631 438h1v1h-1zM639 438h1v1h-1zM647 438h1v1h-1zM55 38h1v1h-1zM55 48h1v1h-1zM55 58h1v1h-1zM55 68h1v1h-1zM55 78h1v1h-1zM55 88h1v1h-1zM55 98h1v1h-1zM55 108h1v1h-1zM55 118h1v1h-1zM55 128h1v1h-1zM55 138h1v1h-1zM55 148h1v1h-1zM55 158h1v1h-1zM55 168h1v1h-1zM55 178h1v1h-1zM55 188h1v1h-1zM55 198h1v1h-1zM55 208h1v1h-1zM55 218h1v1h-1zM55 228h1v1h-1zM55 238h1v1h-1zM55 248h1v1h-1zM55 258h1v1h-1zM55 268h1v1h-1zM55 278h1v1h-1zM55 288h1v1h-1zM55 298h1v1h-1zM55 308h1v1h-1zM55 318h1v1h-1zM55 328h1v1h-1zM55 338h1v1h-1zM55 348h1v1h-1zM55 358h1v1h-1zM55 368h1v1h-1zM55 378h1v1h-1zM55 388h1v1h-1zM55 398h1v1h-1zM55 408h1v1h-1zM55 418h1v1h-1zM55 428h1v1h-1zM55 438h1v1h-1zM95 38h1v1h-1zM95 48h1v1h-1zM95 58h1v1h-1zM95 68h1v1h-1zM95 78h1v1h-1zM95 88h1v1h-1zM95 98h1v1h-1zM95 108h1v1h-1zM95 118h1v1h-1zM95 128h1v1h-1zM95 138h1v1h-1zM95 148h1v1h-1zM95 158h1v1h-1zM95 168h1v1h-1zM95 178h1v1h-1zM95 188h1v1h-1zM95 198h1v1h-1zM95 208h1v1h-1zM95 218h1v1h-1zM95 228h1v1h-1zM95 238h1v1h-1zM95 248h1v1h-1zM95 258h1v1h-1zM95 268h1v1h-1zM95 278h1v1h-1zM95 288h1v1h-1zM95 298h1v1h-1zM95 308h1v1h-1zM95 318h1v1h-1zM95 328h1v1h-1zM95 338h1v1h-1zM95 348h1v1h-1zM95 358h1v1h-1zM95 368h1v1h-1zM95 378h1v1h-1zM95 388h1v1h-1zM95 398h1v1h-1zM95 408h1v1h-1zM95 418h1v1h-1zM95 428h1v1h-1zM95 438h1v1h-1zM135 38h1v1h-1zM135 48h1v1h-1zM135 58h1v1h-1zM135 68h1v1h-1zM135 78h1v1h-1zM135 88h1v1h-1zM135 98h1v1h-1zM135 108h1v1h-1zM135 118h1v1h-1zM135 128h1v1h-1zM135 138h1v1h-1zM135 148h1v1h-1zM135 158h1v1h-1zM135 168h1v1h-1zM135 178h1v1h-1zM135 188h1v1h-1zM135 198h1v1h-1zM135 208h1v1h-1zM135 218h1v1h-1zM135 228h1v1h-1zM135 238h1v1h-1zM135 248h1v1h-1zM135 258h1v1h-1zM135 268h1v1h-1zM135 278h1v1h-1zM135 288h1v1h-1zM135 298h1v1h-1zM135 308h1v1h-1zM135 318h1v1h-1zM135 328h1v1h-1zM135 338h1v1h-1zM135 348h1v1h-1zM135 358h1v1h-1zM135 368h1v1h-1zM135 378h1v1h-1zM135 388h1v1h-1zM135 398h1v1h-1zM135 408h1v1h-1zM135 418h1v1h-1zM135 428h1v1h-1zM135 438h1v1h-1zM175 38h1v1h-1zM175 48h1v1h-1zM175 58h1v1h-1zM175 68h1v1h-1zM175 78h1v1h-1zM175 88h1v1h-1zM175 98h1v1h-1zM175 108h1v1h-1zM175 118h1v1h-1zM175 128h1v1h-1zM175 138h1v1h-1zM175 148h1v1h-1zM175 158h1v1h-1zM175 168h1v1h-1zM175 178h1v1h-1zM175 188h1v1h-1zM175 198h1v1h-1zM175 208h1v1h-1zM175 218h1v1h-1zM175 228h1v1h-1zM175 238h1v1h-1zM175 248h1v1h-1zM175 258h1v1h-1zM175 268h1v1h-1zM175 278h1v1h-1zM175 288h1v1h-1zM175 298h1v1h-1zM175 308h1v1h-1zM175 318h1v1h-1zM175 328h1v1h-1zM175 338h1v1h-1zM175 348h1v1h-1zM175 358h1v1h-1zM175 368h1v1h-1zM175 378h1v1h-1zM175 388h1v1h-1zM175 398h1v1h-1zM175 408h1v1h-1zM175 418h1v1h-1zM175 428h1v1h-1zM175 438h1v1h-1zM215 38h1v1h-1zM215 48h1v1h-1zM215 58h1v1h-1zM215 68h1v1h-1zM215 78h1v1h-1zM215 88h1v1h-1zM215 98h1v1h-1zM215 108h1v1h-1zM215 118h1v1h-1zM215 128h1v1h-1zM215 138h1v1h-1zM215 148h1v1h-1zM215 158h1v1h-1zM215 168h1v1h-1zM215 178h1v1h-1zM215 188h1v1h-1zM215 198h1v1h-1zM215 208h1v1h-1zM215 218h1v1h-1zM215 228h1v1h-1zM215 238h1v1h-1zM215 248h1v1h-1zM215 258h1v1h-1zM215 268h1v1h-1zM215 278h1v1h-1zM215 288h1v1h-1zM215 298h1v1h-1zM215 308h1v1h-1zM215 318h1v1h-1zM215 328h1v1h-1zM215 338h1v1h-1zM215 348h1v1h-1zM215 358h1v1h-1zM215 368h1v1h-1zM215 378h1v1h-1zM215 388h1v1h-1zM215 398h1v1h-1zM215 408h1v1h-1zM215 418h1v1h-1zM215 428h1v1h-1zM215 438h1v1h-1zM255 38h1v1h-1zM255 48h1v1h-1zM255 58h1v1h-1zM255 68h1v1h-1zM255 78h1v1h-1zM255 88h1v1h-1zM255 98h1v1h-1zM255 108h1v1h-1zM255 118h1v1h-1zM255 128h1v1h-1zM255 138h1v1h-1zM255 148h1v1h-1zM255 158h1v1h-1zM255 168h1v1h-1zM255 178h1v1h-1zM255 188h1v1h-1zM255 198h1v1h-1zM255 208h1v1h-1zM255 218h1v1h-1zM255 228h1v1h-1zM255 238h1v1h-1zM255 248h1v1h-1zM255 258h1v1h-1zM255 268h1v1h-1zM255 278h1v1h-1zM255 288h1v1h-1zM255 298h1v1h-1zM255 308h1v1h-1zM255 318h1v1h-1zM255 328h1v1h-1zM255 338h1v1h-1zM255 348h1v1h-1zM255 358h1v1h-1zM255 368h1v1h-1zM255 378h1v1h-1zM255 388h1v1h-1zM255 398h1v1h-1zM255 408h1v1h-1zM255 418h1v1h-1zM255 428h1v1h-1zM255 438h1v1h-1zM295 38h1v1h-1zM295 48h1v1h-1zM295 58h1v1h-1zM295 68h1v1h-1zM295 78h1v1h-1zM295 88h1v1h-1zM295 98h1v1h-1zM295 108h1v1h-1zM295 118h1v1h-1zM295 128h1v1h-1zM295 138h1v1h-1zM295 148h1v1h-1zM295 158h1v1h-1zM295 168h1v1h-1zM295 178h1v1h-1zM295 188h1v1h-1zM295 198h1v1h-1zM295 208h1v1h-1zM295 218h1v1h-1zM295 228h1v1h-1zM295 238h1v1h-1zM295 248h1v1h-1zM295 258h1v1h-1zM295 268h1v1h-1zM295 278h1v1h-1zM295 288h1v1h-1zM295 298h1v1h-1zM295 308h1v1h-1zM295 318h1v1h-1zM295 328h1v1h-1zM295 338h1v1h-1zM295 348h1v1h-1zM295 358h1v1h-1zM295 368h1v1h-1zM295 378h1v1h-1zM295 388h1v1h-1zM295 398h1v1h-1zM295 408h1v1h-1zM295 418h1v1h-1zM295 428h1v1h-1zM295 438h1v1h-1zM375 38h1v1h-1zM375 48h1v1h-1zM375 58h1v1h-1zM375 68h1v1h-1zM375 78h1v1h-1zM375 88h1v1h-1zM375 98h1v1h-1zM375 108h1v1h-1zM375 118h1v1h-1zM375 128h1v1h-1zM375 138h1v1h-1zM375 148h1v1h-1zM375 158h1v1h-1zM375 168h1v1h-1zM375 178h1v1h-1zM375 188h1v1h-1zM375 198h1v1h-1zM375 208h1v1h-1zM375 218h1v1h-1zM375 228h1v1h-1zM375 238h1v1h-1zM375 248h1v1h-1zM375 258h1v1h-1zM375 268h1v1h-1zM375 278h1v1h-1zM375 288h1v1h-1zM375 298h1v1h-1zM375 308h1v1h-1zM375 318h1v1h-1zM375 328h1v1h-1zM375 338h1v1h-1zM375 348h1v1h-1zM375 358h1v1h-1zM375 368h1v1h-1zM375 378h1v1h-1zM375 388h1v1h-1zM375 398h1v1h-1zM375 408h1v1h-1zM375 418h1v1h-1zM375 428h1v1h-1zM375 438h1v1h-1zM415 38h1v1h-1zM415 48h1v1h-1zM415 58h1v1h-1zM415 68h1v1h-1zM415 78h1v1h-1zM415 88h1v1h-1zM415 98h1v1h-1zM415 108h1v1h-1zM415 118h1v1h-1zM415 128h1v1h-1zM415 138h1v1h-1zM415 148h1v1h-1zM415 158h1v1h-1zM415 168h1v1h-1zM415 178h1v1h-1zM415 188h1v1h-1zM415 198h1v1h-1zM415 208h1v1h-1zM415 218h1v1h-1zM415 228h1v1h-1zM415 238h1v1h-1zM415 248h1v1h-1zM415 258h1v1h-1zM415 268h1v1h-1zM415 278h1v1h-1zM415 288h1v1h-1zM415 298h1v1h-1zM415 308h1v1h-1zM415 318h1v1h-1zM415 328h1v1h-1zM415 338h1v1h-1zM415 348h1v1h-1zM415 358h1v1h-1zM415 368h1v1h-1zM415 378h1v1h-1zM415 388h1v1h-1zM415 398h1v1h-1zM415 408h1v1h-1zM415 418h1v1h-1zM415 428h1v1h-1zM415 438h1v1h-1zM455 38h1v1h-1zM455 48h1v1h-1zM455 58h1v1h-1zM455 68h1v1h-1zM455 78h1v1h-1zM455 88h1v1h-1zM455 98h1v1h-1zM455 108h1v1h-1zM455 118h1v1h-1zM455 128h1v1h-1zM455 138h1v1h-1zM455 148h1v1h-1zM455 158h1v1h-1zM455 168h1v1h-1zM455 178h1v1h-1zM455 188h1v1h-1zM455 198h1v1h-1zM455 208h1v1h-1zM455 218h1v1h-1zM455 228h1v1h-1zM455 238h1v1h-1zM455 248h1v1h-1zM455 258h1v1h-1zM455 268h1v1h-1zM455 278h1v1h-1zM455 288h1v1h-1zM455 298h1v1h-1zM455 308h1v1h-1zM455 318h1v1h-1zM455 328h1v1h-1zM455 338h1v1h-1zM455 348h1v1h-1zM455 358h1v1h-1zM455 368h1v1h-1zM455 378h1v1h-1zM455 388h1v1h-1zM455 398h1v1h-1zM455 408h1v1h-1zM455 418h1v1h-1zM455 428h1v1h-1zM455 438h1v1h-1zM495 38h1v1h-1zM495 48h1v1h-1zM495 58h1v1h-1zM495 68h1v1h-1zM495 78h1v1h-1zM495 88h1v1h-1zM495 98h1v1h-1zM495 108h1v1h-1zM495 118h1v1h-1zM495 128h1v1h-1zM495 138h1v1h-1zM495 148h1v1h-1zM495 158h1v1h-1zM495 168h1v1h-1zM495 178h1v1h-1zM495 188h1v1h-1zM495 198h1v1h-1zM495 208h1v1h-1zM495 218h1v1h-1zM495 228h1v1h-1zM495 238h1v1h-1zM495 248h1v1h-1zM495 258h1v1h-1zM495 268h1v1h-1zM495 278h1v1h-1zM495 288h1v1h-1zM495 298h1v1h-1zM495 308h1v1h-1zM495 318h1v1h-1zM495 328h1v1h-1zM495 338h1v1h-1zM495 348h1v1h-1zM495 358h1v1h-1zM495 368h1v1h-1zM495 378h1v1h-1zM495 388h1v1h-1zM495 398h1v1h-1zM495 408h1v1h-1zM495 418h1v1h-1zM495 428h1v1h-1zM495 438h1v1h-1zM535 38h1v1h-1zM535 48h1v1h-1zM535 58h1v1h-1zM535 68h1v1h-1zM535 78h1v1h-1zM535 88h1v1h-1zM535 98h1v1h-1zM535 108h1v1h-1zM535 118h1v1h-1zM535 128h1v1h-1zM535 138h1v1h-1zM535 148h1v1h-1zM535 158h1v1h-1zM535 168h1v1h-1zM535 178h1v1h-1zM535 188h1v1h-1zM535 198h1v1h-1zM535 208h1v1h-1zM535 218h1v1h-1zM535 228h1v1h-1zM535 238h1v1h-1zM535 248h1v1h-1zM535 258h1v1h-1zM535 268h1v1h-1zM535 278h1v1h-1zM535 288h1v1h-1zM535 298h1v1h-1zM535 308h1v1h-1zM535 318h1v1h-1zM535 328h1v1h-1zM535 338h1v1h-1zM535 348h1v1h-1zM535 358h1v1h-1zM535 368h1v1h-1zM535 378h1v1h-1zM535 388h1v1h-1zM535 398h1v1h-1zM535 408h1v1h-1zM535 418h1v1h-1zM535 428h1v1h-1zM535 438h1v1h-1zM575 38h1v1h-1zM575 48h1v1h-1zM575 58h1v1h-1zM575 68h1v1h-1zM575 78h1v1h-1zM575 88h1v1h-1zM575 98h1v1h-1zM575 108h1v1h-1zM575 118h1v1h-1zM575 128h1v1h-1zM575 138h1v1h-1zM575 148h1v1h-1zM575 158h1v1h-1zM575 168h1v1h-1zM575 178h1v1h-1zM575 188h1v1h-1zM575 198h1v1h-1zM575 208h1v1h-1zM575 218h1v1h-1zM575 228h1v1h-1zM575 238h1v1h-1zM575 248h1v1h-1zM575 258h1v1h-1zM575 268h1v1h-1zM575 278h1v1h-1zM575 288h1v1h-1zM575 298h1v1h-1zM575 308h1v1h-1zM575 318h1v1h-1zM575 328h1v1h-1zM575 338h1v1h-1zM575 348h1v1h-1zM575 358h1v1h-1zM575 368h1v1h-1zM575 378h1v1h-1zM575 388h1v1h-1zM575 398h1v1h-1zM575 408h1v1h-1zM575 418h1v1h-1zM575 428h1v1h-1zM575 438h1v1h-1zM615 38h1v1h-1zM615 48h1v1h-1zM615 58h1v1h-1zM615 68h1v1h-1zM615 78h1v1h-1zM615 88h1v1h-1zM615 98h1v1h-1zM615 108h1v1h-1zM615 118h1v1h-1zM615 128h1v1h-1zM615 138h1v1h-1zM615 148h1v1h-1zM615 158h1v1h-1zM615 168h1v1h-1zM615 178h1v1h-1zM615 188h1v1h-1zM615 198h1v1h-1zM615 208h1v1h-1zM615 218h1v1h-1zM615 228h1v1h-1zM615 238h1v1h-1zM615 248h1v1h-1zM615 258h1v1h-1zM615 268h1v1h-1zM615 278h1v1h-1zM615 288h1v1h-1zM615 298h1v1h-1zM615 308h1v1h-1zM615 318h1v1h-1zM615 328h1v1h-1zM615 338h1v1h-1zM615 348h1v1h-1zM615 358h1v1h-1zM615 368h1v1h-1zM615 378h1v1h-1zM615 388h1v1h-1zM615 398h1v1h-1zM615 408h1v1h-1zM615 418h1v1h-1zM615 428h1v1h-1zM615 438h1v1h-1zM655 38h1v1h-1zM655 48h1v1h-1zM655 58h1v1h-1zM655 68h1v1h-1zM655 78h1v1h-1zM655 88h1v1h-1zM655 98h1v1h-1zM655 108h1v1h-1zM655 118h1v1h-1zM655 128h1v1h-1zM655 138h1v1h-1zM655 148h1v1h-1zM655 158h1v1h-1zM655 168h1v1h-1zM655 178h1v1h-1zM655 188h1v1h-1zM655 198h1v1h-1zM655 208h1v1h-1zM655 218h1v1h-1zM655 228h1v1h-1zM655 238h1v1h-1zM655 248h1v1h-1zM655 258h1v1h-1zM655 268h1v1h-1zM655 278h1v1h-1zM655 288h1v1h-1zM655 298h1v1h-1zM655 308h1v1h-1zM655 318h1v1h-1zM655 328h1v1h-1zM655 338h1v1h-1zM655 348h1v1h-1zM655 358h1v1h-1zM655 368h1v1h-1zM655 378h1v1h-1zM655 388h1v1h-1zM655 398h1v1h-1zM655 408h1v1h-1zM655 418h1v1h-1zM655 428h1v1h-1zM655 438h1v1h-1z"/>
<path fill="#b8b8b8" d="M16 238h639v1h-639zM335 29h1v419h-1zM23 235h1v7h-1zM31 235h1v7h-1zM39 235h1v7h-1zM47 235h1v7h-1zM55 235h1v7h-1zM63 235h1v7h-1zM71 235h1v7h-1zM79 235h1v7h-1zM87 235h1v7h-1zM95 235h1v7h-1zM103 235h1v7h-1zM111 235h1v7h-1zM119 235h1v7h-1zM127 235h1v7h-1zM135 235h1v7h-1zM143 235h1v7h-1zM151 235h1v7h-1zM159 235h1v7h-1zM167 235h1v7h-1zM175 235h1v7h-1zM183 235h1v7h-1zM191 235h1v7h-1zM199 235h1v7h-1zM207 235h1v7h-1zM215 235h1v7h-1zM223 235h1v7h-1zM231 235h1v7h-1zM239 235h1v7h-1zM247 235h1v7h-1zM255 235h1v7h-1zM263 235h1v7h-1zM271 235h1v7h-1zM279 235h1v7h-1zM287 235h1v7h-1zM295 235h1v7h-1zM303 235h1v7h-1zM311 235h1v7h-1zM319 235h1v7h-1zM327 235h1v7h-1zM335 235h1v7h-1zM343 235h1v7h-1zM351 235h1v7h-1zM359 235h1v7h-1zM367 235h1v7h-1zM375 235h1v7h-1zM383 235h1v7h-1zM391 235h1v7h-1zM399 235h1v7h-1zM407 235h1v7h-1zM415 235h1v7h-1zM423 235h1v7h-1zM431 235h1v7h-1zM439 235h1v7h-1zM447 235h1v7h-1zM455 235h1v7h-1zM463 235h1v7h-1zM471 235h1v7h-1zM479 235h1v7h-1zM487 235h1v7h-1zM495 235h1v7h-1zM503 235h1v7h-1zM511 235h1v7h-1zM519 235h1v7h-1zM527 235h1v7h-1zM535 235h1v7h-1zM543 235h1v7h-1zM551 235h1v7h-1zM559 235h1v7h-1zM567 235h1v7h-1zM575 235h1v7h-1zM583 235h1v7h-1zM591 235h1v7h-1zM599 235h1v7h-1zM607 235h1v7h-1zM615 235h1v7h-1zM623 235h1v7h-1zM631 235h1v7h-1zM639 235h1v7h-1zM647 235h1v7h-1zM332 38h7v1h-7zM332 48h7v1h-7zM332 58h7v1h-7zM332 68h7v1h-7zM332 78h7v1h-7zM332 88h7v1h-7zM332 98h7v1h-7zM332 108h7v1h-7zM332 118h7v1h-7zM332 128h7v1h-7zM332 138h7v1h-7zM332 148h7v1h-7zM332 158h7v1h-7zM332 168h7v1h-7zM332 178h7v1h-7zM332 188h7v1h-7zM332 198h7v1h-7zM332 208h7v1h-7zM332 218h7v1h-7zM332 228h7v1h-7zM332 238h7v1h-7zM332 248h7v1h-7zM332 258h7v1h-7zM332 268h7v1h-7zM332 278h7v1h-7zM332 288h7v1h-7zM332 298h7v1h-7zM332 308h7v1h-7zM332 318h7v1h-7zM332 328h7v1h-7zM332 338h7v1h-7zM332 348h7v1h-7zM332 358h7v1h-7zM332 368h7v1h-7zM332 378h7v1h-7zM332 388h7v1h-7zM332 398h7v1h-7zM332 408h7v1h-7zM332 418h7v1h-7zM332 428h7v1h-7zM332 438h7v1h-7z"/>
<rect x="15" y="28" width="642" height="1" fill="#d8d8d8"/>
<rect x="15" y="28" width="1" height="421" fill="#d8d8d8"/>
<rect x="15" y="448" width="641" height="1" fill="#d8d8d8"/>
<rect x="656" y="0" width="1" height="480" fill="#d8d8d8"/>
<polyline fill="none" stroke="#e6e65a" stroke-width="1.3" stroke-linejoin="round" points="16,240 18,240 18.5,242 21.5,242 22,240 24,240 24.5,238 25.5,236 26.2,233 27.4,229.5 29,226 30,221 31,215 31.8,211 32.75,205 33.5,200 34.6,193 35.6,187 36.8,181 38,175 38.7,170 39.6,162 41,157.5 42,151 43.4,146 44.6,140 45.2,136 46.5,129 48.5,123 50.5,119.5 52.5,117.5 54,115.5 56,114 59,113 61,112 62.5,112 63,110 67.5,110 68,108 72.5,108 73,106 76.5,106 77,108 105,108 105.5,110 121.5,110 122,108 136.5,108 137,110 144.5,110 145,108 148.5,108 149,106 155.5,106 156.5,108 158,110 159,111.5 160.5,114 161.5,117 162.5,119 163,121 164.4,127.5 165.6,133.75 166.9,140 168,146 168.75,152.5 170,158.75 170.6,165 172,175 173.5,181 174.25,187 175.4,193 176.5,198 178,206 178.75,210 180.4,215.8 182,221.7 184.2,225.8 186.25,229.6 187.9,232 188.5,233 193.5,233 194,236 196.5,236 197,238 310,238 311,240 312.5,242 316,242 317,240 318,238 320,237 320.5,235.5 322,232 323.5,228 324.5,224 325.5,218 327,210 328,206 329.4,200 330.4,191.7 331.5,184.4 332.5,178 333.5,171.9 334.6,163.5 336,155.2 337.2,150 338,144 339.5,138 340.5,132 341.5,129 342.5,126 345,122 346.5,118 349,115.5 350,114 354.5,114 355,112 359.5,112 360,110 365.5,110 366,108 374,108 374.5,106 375,108 385.5,108 386,110 392.5,110 393,108 413,108 413.5,110 420,110 420.5,108 422,108 422.5,110 424,110 424.5,108 434,108 434.5,110 436,110 436.5,108 443,108 443.5,106 451,106 451.5,108 453,110 454,113 455,115.5 456,117.5 457,119.5 458,121 459.75,127.5 461,134 462.25,140 463.5,146 464.4,152.5 465.25,159 466.25,165 467.8,176 468.9,182.5 470,188.5 470.75,194.5 471.9,200.5 473.4,208 474.6,211.7 476.25,217.5 477.5,223.3 480,227.5 482.9,231.7 485.4,233.75 487,236 496.5,236 497,238 582,238 582.5,240 587,240 587.5,238 595,238 595.5,236 602,236 602.5,238 607,238 607.5,240 613,240 613.5,238 615,238 616.35,234.6 617.9,228.3 619.5,223 621,215.8 622.3,209.6 623.3,204.4 624.4,200 625.2,195 626.25,190 628.1,177.5 629.75,165 631,156.25 632.75,147.5 634.4,140 635.6,136.7 637,130.4 638.5,126.25 640.8,121 644,115.8 646.5,113.75 649.7,111.7 652.8,110.1 655,110"/>
<path fill="#e6e65a" d="M16 239H18V241H16zM18.5 241H21.5V243H18.5zM22 239H24V241H22zM63 109H67.5V111H63zM68 107H72.5V109H68zM73 105H76.5V107H73zM77 107H105V109H77zM105.5 109H121.5V111H105.5zM122 107H136.5V109H122zM137 109H144.5V111H137zM145 107H148.5V109H145zM149 105H155.5V107H149zM188.5 232H193.5V234H188.5zM194 235H196.5V237H194zM197 237H310V239H197zM312.5 241H316V243H312.5zM350 113H354.5V115H350zM355 111H359.5V113H355zM360 109H365.5V111H360zM366 107H374V109H366zM375 107H385.5V109H375zM386 109H392.5V111H386zM393 107H413V109H393zM413.5 109H420V111H413.5zM424.5 107H434V109H424.5zM436.5 107H443V109H436.5zM443.5 105H451V107H443.5zM487 235H496.5V237H487zM497 237H582V239H497zM582.5 239H587V241H582.5zM587.5 237H595V239H587.5zM595.5 235H602V237H595.5zM602.5 237H607V239H602.5zM607.5 239H613V241H607.5z"/>
<polygon points="656,164.8 656,180.6 642.8,172.7" fill="#f2f200"/>
<polygon points="0,232 8,232 15.5,239 8,246.5 0,246.5" fill="#f0f000"/>
<path d="M4.3 244.5V234.3M1.6 237.2L4.3 234.5" fill="none" stroke="#303020" stroke-width="2.2"/>
<path d="M300.5 28.5H369.5V41.5L366.5 44.5H341L335.5 51.5L330 44.5H303.5L300.5 41.5Z" fill="#3b76f0" stroke="#a8c4ff" stroke-width="1"/>
</svg>
<div class="t" style="left:275.5px;top:4px;font-size:19px;font-weight:bold;color:#d8f8f8">M</div>
<div class="t" style="left:523px;top:4.5px;font-size:19px;font-weight:bold;color:#d8f8f8">W</div>
<div class="t" style="left:324px;top:6px;font-size:18px;letter-spacing:0.250px;color:#ffffff;-webkit-text-stroke:0.4px #000;transform-origin:0 0;transform:scaleX(1)">200ns</div>
<div class="t" style="left:569px;top:6px;font-size:18px;letter-spacing:0.400px;color:#ffffff;-webkit-text-stroke:0.4px #000;transform-origin:0 0;transform:scaleX(1)">8.00ns</div>
<div class="t" style="left:312px;top:29px;font-size:17px;letter-spacing:-0.800px;color:#ffffff;-webkit-text-stroke:0.4px #3d7cf2;transform-origin:0 0;transform:scaleX(1)">0.000s</div>
<div class="t" style="left:678px;top:3px;font-size:20px;letter-spacing:0.666px;color:#ffffff;-webkit-text-stroke:0.4px #484848;transform-origin:0 0;transform:scaleX(1)">UTILITY</div>
<div class="t" style="left:699px;top:69px;font-size:18px;letter-spacing:-0.200px;color:#ffffff;-webkit-text-stroke:0.4px #7a7a7a;transform-origin:0 0;transform:scaleX(1)">System</div>
<div class="t" style="left:701px;top:87px;font-size:18px;letter-spacing:0.800px;color:#ffffff;-webkit-text-stroke:0.4px #7a7a7a;transform-origin:0 0;transform:scaleX(1)">Status</div>
<div class="t" style="left:698px;top:150px;font-size:18px;letter-spacing:0.200px;color:#ffffff;-webkit-text-stroke:0.4px #7a7a7a;transform-origin:0 0;transform:scaleX(1)">Update</div>
<div class="t" style="left:690px;top:168px;font-size:18px;letter-spacing:0.000px;color:#ffffff;-webkit-text-stroke:0.4px #7a7a7a;transform-origin:0 0;transform:scaleX(1)">Firmware</div>
<div class="t" style="left:708px;top:227px;font-size:18px;letter-spacing:-0.333px;color:#ffffff;-webkit-text-stroke:0.4px #7a7a7a;transform-origin:0 0;transform:scaleX(1)">Save</div>
<div class="t" style="left:689px;top:245px;font-size:18px;letter-spacing:-0.428px;color:#ffffff;-webkit-text-stroke:0.4px #7a7a7a;transform-origin:0 0;transform:scaleX(1)">Waveform</div>
<div class="t" style="left:681px;top:318px;font-size:18px;letter-spacing:0.200px;color:#ffffff;-webkit-text-stroke:0.4px #7a7a7a;transform-origin:0 0;transform:scaleX(1)">Do Self Cal</div>
<div class="t" style="left:691px;top:452px;font-size:18px;letter-spacing:0.143px;color:#ffffff;-webkit-text-stroke:0.4px #7a7a7a;transform-origin:0 0;transform:scaleX(1)">Page 1/3</div>
<div class="t" style="left:104px;top:457px;font-size:18px;letter-spacing:0.250px;color:#e8e860;-webkit-text-stroke:0.4px #000;transform-origin:0 0;transform:scaleX(1)">2.00V</div>
<div class="t" style="left:353px;top:456px;font-size:18px;letter-spacing:1.600px;color:#e8e860;-webkit-text-stroke:0.4px #5a5a5a;transform-origin:0 0;transform:scaleX(0.8)">CH</div>
<div class="t" style="left:420px;top:456px;font-size:18px;letter-spacing:0.250px;color:#e8e860;-webkit-text-stroke:0.4px #000;transform-origin:0 0;transform:scaleX(1)">2.64V</div>
<div class="t" style="left:535px;top:456px;font-size:18px;letter-spacing:-0.125px;color:#e8e860;-webkit-text-stroke:0.4px #000;transform-origin:0 0;transform:scaleX(1)">0.00000Hz</div>
<div class="t" style="left:15px;top:463px;font-size:13px;letter-spacing:-0.6px;color:#d8d860">DC</div>
</body></html>
